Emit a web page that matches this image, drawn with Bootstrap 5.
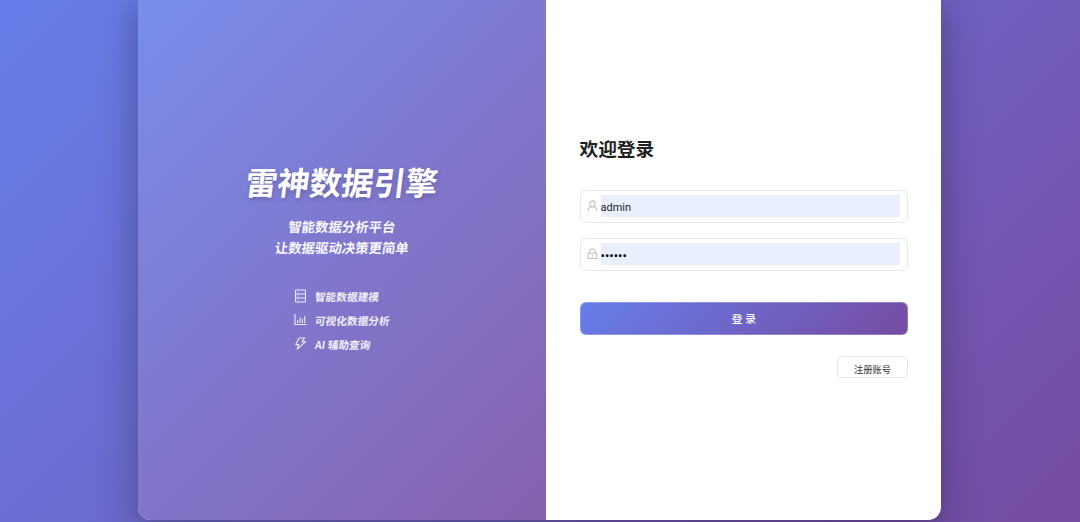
<!DOCTYPE html>
<html lang="zh-CN">
<head>
    <meta charset="UTF-8">
    <meta name="viewport" content="width=device-width, initial-scale=1.0">
    <title>雷神数据引擎</title>
    <link href="https://cdn.jsdelivr.net/npm/bootstrap@5.3.3/dist/css/bootstrap.min.css" rel="stylesheet">
    <style>
        body {
            height: 522px;
            font-family: "Noto Sans", "Noto Sans CJK SC", sans-serif;
            background: linear-gradient(135deg, #667eea 0%, #764ba2 100%);
        }
        .login-box {
            width: 803.5px;
            height: 532px;
            margin: -12px 0 0 137.5px;
            border-radius: 13px;
            box-shadow: 0 13px 40px rgba(0, 0, 0, 0.3);
        }
        .brand-side {
            width: 408.5px;
            padding-top: 174px;
            color: #fff;
            background: linear-gradient(rgba(255, 255, 255, 0.12), rgba(255, 255, 255, 0.12)),
                linear-gradient(135deg, #667eea 0%, #764ba2 100%);
        }
        .slanted {
            transform: skewX(-7deg);
            font-family: "Noto Sans CJK SC", sans-serif;
            white-space: nowrap;
        }
        .brand-title {
            font-size: 32px;
            line-height: 38px;
            font-weight: 700;
            text-shadow: 1px 2px 5px rgba(0, 0, 0, 0.2);
        }
        .brand-desc {
            margin-top: 15.5px;
            font-size: 13.4px;
            line-height: 21.3px;
            font-weight: 700;
            opacity: 0.95;
        }
        .feature-list {
            width: 96px;
            margin-top: 25.9px;
            font-size: 10.7px;
            font-weight: 700;
            opacity: 0.88;
        }
        .feature-item { height: 24px; }
        .feature-item svg { margin-right: 8px; }
        .feature-item .slanted { padding-top: 2px; }
        .form-side {
            padding: 147px 33px 0 33.5px;
        }
        .form-title {
            font-family: "Noto Sans CJK SC", sans-serif;
            font-size: 18.7px;
            line-height: 26px;
            font-weight: 700;
            color: #1f1f1f;
            margin-bottom: 29px;
        }
        .field {
            height: 33px;
            padding: 0 7px 1px 6px;
            margin-bottom: 15px;
            border: 1px solid #e8e8e8;
            border-radius: 6px;
        }
        .field svg { margin-right: 3px; }
        .field input {
            height: 22px;
            padding: 2px 0 0;
            border: 0;
            border-radius: 0;
            background: #e8f0fe;
            font-family: Roboto, "Noto Sans CJK SC", sans-serif;
            font-size: 11px;
            color: #222;
        }
        .field input[type="password"] { font-size: 13px; color: #000; }
        .field input:focus { background: #e8f0fe; box-shadow: none; }
        .btn-login {
            height: 33px;
            margin-top: 31px;
            padding: 1px 0 0;
            border: 1px solid rgba(255, 255, 255, 0.25);
            border-radius: 6px;
            color: #fff;
            font-size: 10.7px;
            font-weight: 500;
            background: linear-gradient(135deg, #667eea 0%, #764ba2 100%) border-box;
        }
        .btn-register {
            width: 71px;
            height: 22px;
            margin-top: 21px;
            padding: 3px 0 0;
            border: 1px solid #e6e6e6;
            border-radius: 5px;
            background: #fff;
            color: #333;
            font-size: 9.3px;
            line-height: 20px;
        }
    </style>
</head>
<body class="overflow-hidden">

<div class="login-box d-flex overflow-hidden bg-white">
    <div class="brand-side flex-shrink-0 d-flex flex-column align-items-center">
        <h1 class="brand-title slanted mb-0">雷神数据引擎</h1>
        <div class="brand-desc text-center">
            <div class="slanted">智能数据分析平台</div>
            <div class="slanted">让数据驱动决策更简单</div>
        </div>
        <div class="feature-list">
            <div class="feature-item d-flex align-items-center">
                <svg width="13" height="14" viewBox="0 0 13 14" fill="none" stroke="#fff">
                    <path d="M1.500 1h10v12h-10zM1.500 5h10M1.500 9h10M3.500 3h1M3.500 7h1M3.500 11h1"/>
                </svg>
                <span class="slanted">智能数据建模</span>
            </div>
            <div class="feature-item d-flex align-items-center">
                <svg width="13" height="13" viewBox="0 0 13 13" fill="none" stroke="#fff" stroke-width="1.1">
                    <path d="M1 1v10.500h11.500M3.700 10V7M6.200 10V4.500M8.400 10V6M10.700 10V3"/>
                </svg>
                <span class="slanted">可视化数据分析</span>
            </div>
            <div class="feature-item d-flex align-items-center">
                <svg width="13" height="14" viewBox="0 0 13 14" fill="none" stroke="#fff" stroke-width="1.1" stroke-linejoin="round">
                    <path d="M5.200 1h5.300L8 4.700h3.600L3.200 12.200l1.600-4.600H1.700z"/>
                </svg>
                <span class="slanted">AI 辅助查询</span>
            </div>
        </div>
    </div>

    <div class="form-side flex-grow-1">
        <h2 class="form-title">欢迎登录</h2>
        <form>
            <div class="field d-flex align-items-center">
                <svg class="flex-shrink-0" width="11" height="12" viewBox="0 0 11 12" fill="none" stroke="#c4c4c4" stroke-width="1.1">
                    <circle cx="5.500" cy="3.700" r="2.800"/>
                    <path d="M1 11.200c.2-2.900 1.900-4.600 4.500-4.600s4.300 1.700 4.500 4.600"/>
                </svg>
                <input type="text" class="form-control" value="admin" aria-label="用户名">
            </div>
            <div class="field d-flex align-items-center">
                <svg class="flex-shrink-0" width="11" height="12" viewBox="0 0 11 12" fill="none" stroke="#c4c4c4" stroke-width="1.1">
                    <path d="M1.200 5.300h8.600v5.200h-8.600zM2.900 5.300v-3q0-1.300 1.300-1.300h2.600q1.300 0 1.300 1.300v3M5.500 7.100v1.700"/>
                </svg>
                <input type="password" class="form-control" value="123456" aria-label="密码">
            </div>
            <button type="button" class="btn btn-login w-100 d-block">登 录</button>
            <div class="d-flex justify-content-end">
                <button type="button" class="btn btn-register">注册账号</button>
            </div>
        </form>
    </div>
</div>

<script src="https://cdn.jsdelivr.net/npm/bootstrap@5.3.3/dist/js/bootstrap.bundle.min.js"></script>
</body>
</html>
